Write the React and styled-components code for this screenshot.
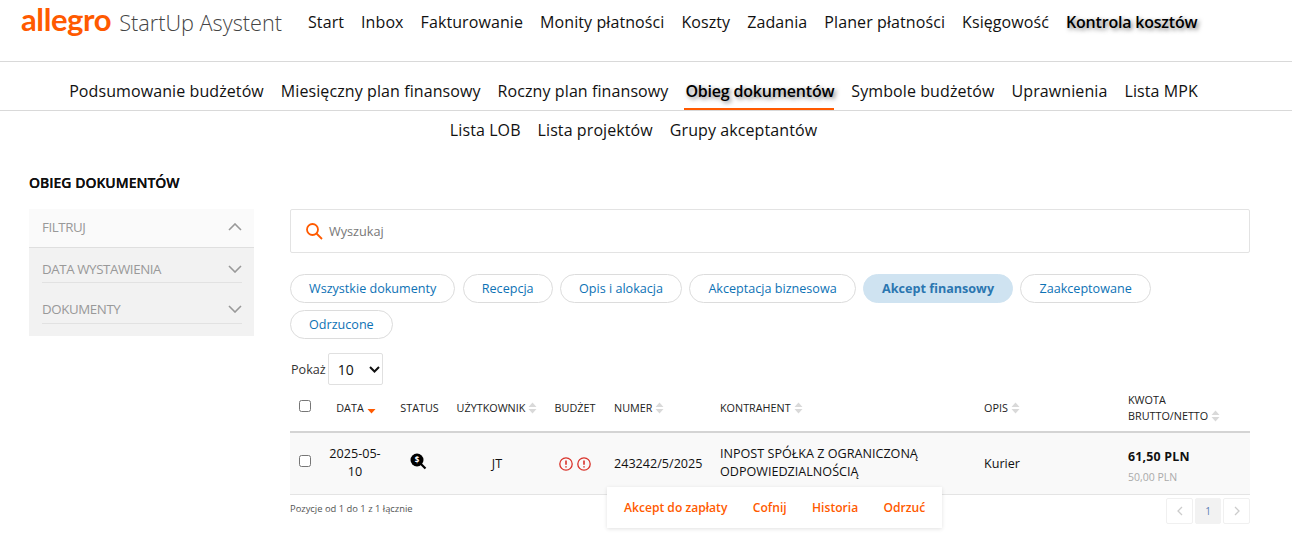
import React from "react";
import styled, { createGlobalStyle } from "styled-components";

const Global = createGlobalStyle`
  html, body { margin: 0; padding: 0; background: #fff; }
  body { font-family: "Open Sans", "Noto Sans", sans-serif; color: #111; overflow: hidden; }
  * { box-sizing: border-box; }
`;

const Page = styled.div`
  width: 1292px;
  height: 542px;
  overflow: hidden;
`;

const Header = styled.header`
  height: 62px;
  border-bottom: 1px solid #d9d9d9;
  display: flex;
  align-items: flex-start;
  padding: 0 0 0 21px;
`;

const Brand = styled.div`
  display: flex;
  align-items: baseline;
  width: 287px;
  height: 36px;
  white-space: nowrap;
`;

const BrandMark = styled.span`
  font-family: "Lato", sans-serif;
  font-weight: 700;
  font-size: 31px;
  letter-spacing: -0.4px;
  color: #ff5a00;
  line-height: 38px;
`;

const BrandText = styled.span`
  font-size: 21.7px;
  font-weight: 300;
  color: #444;
  margin-left: 8px;
  line-height: 38px;
`;

const TopNav = styled.nav`
  display: flex;
  gap: 17px;
  padding-top: 10px;
`;

const TopLink = styled.a`
  position: relative;
  font-size: 16px;
  line-height: 24px;
  letter-spacing: .09px;
  color: #111;
  white-space: nowrap;
  ${(p) => p.$active && `font-weight: 600; letter-spacing: -.2px; color:#000; text-shadow: 2px 2px 4px rgba(0,0,0,.5);`}
`;

const SubNavRow = styled.nav`
  display: flex;
  justify-content: center;
  gap: 17px;
  height: 38px;
  align-items: center;
  padding: 0 25px 0 0;
  ${(p) => p.$ruled && `border-bottom: 1px solid #d9d9d9; height: 49px; padding-top: 9px;`}
`;

const SubLink = styled(TopLink)`
  ${(p) =>
    p.$active &&
    `&::after {
      content: "";
      position: absolute;
      left: -1px;
      right: 0;
      bottom: -7px;
      height: 2px;
      background: #ff5a00;
    }`}
`;

const Content = styled.div`
  display: flex;
  flex-direction: column;
  padding: 24px 42px 0 29px;
`;

const Title = styled.h1`
  margin: 0 0 16px;
  font-size: 14px;
  line-height: 20px;
  font-weight: 600;
  color: #111;
  text-shadow: 0 0 .5px #111;
  height: 20px;
`;

const Columns = styled.div`
  display: grid;
  grid-template-columns: 225px 960px;
  column-gap: 36px;
  align-items: start;
`;

const Sidebar = styled.aside`
  background: #f2f2f2;
  height: 127px;
`;

const FilterHead = styled.div`
  height: 39px;
  background: #fafafa;
  border-bottom: 1px solid #dfdfdf;
  display: flex;
  align-items: center;
  justify-content: space-between;
  padding: 0 12px 2px 13px;
  font-size: 13.3px;
  letter-spacing: -0.4px;
  color: #999;
`;

const FilterRow = styled.div`
  margin: 0 12px 0 13px;
  height: ${(p) => p.$h}px;
  border-bottom: 1px solid #e2e2e2;
  display: flex;
  align-items: center;
  justify-content: space-between;
  padding: ${(p) => p.$pt}px 0 4px;
  font-size: 13.3px;
  letter-spacing: -0.4px;
  color: #999;
`;

const Main = styled.main`
  display: flex;
  flex-direction: column;
  min-width: 0;
`;

const Search = styled.div`
  height: 44px;
  border: 1px solid #e3e3e3;
  border-radius: 2px;
  display: flex;
  align-items: center;
  gap: 6px;
  padding-left: 14px;
  font-size: 12.7px;
  color: #777;
`;

const Tabs = styled.div`
  display: flex;
  flex-wrap: wrap;
  gap: 7px 7.4px;
  margin-top: 21px;
`;

const Tab = styled.button`
  height: 29px;
  padding: 0 18px;
  border-radius: 15px;
  border: 1px solid ${(p) => (p.$active ? "#cfe3f1" : "#dcdcdc")};
  background: ${(p) => (p.$active ? "#cfe3f1" : "#fff")};
  color: ${(p) => (p.$active ? "#2b76b0" : "#0d72b5")};
  font-family: inherit;
  font-size: 12.6px;
  font-weight: ${(p) => (p.$active ? 700 : 400)};
  white-space: nowrap;
`;

const ShowRow = styled.div`
  display: flex;
  align-items: center;
  gap: 2px;
  margin-top: 14px;
  height: 32px;
  font-size: 12.6px;
  color: #333;
  padding-left: 1px;
`;

const PageSelect = styled.div`
  width: 55px;
  height: 32px;
  border: 1px solid #e0e0e0;
  border-radius: 2px;
  display: flex;
  align-items: center;
  justify-content: space-between;
  padding: 0 2px 0 9px;
  font-size: 14px;
  color: #111;
`;

const Table = styled.table`
  width: 960px;
  border-collapse: collapse;
  table-layout: fixed;
`;

const Th = styled.th`
  height: 47px;
  padding: 0 0 0 ${(p) => p.$pl ?? 0}px;
  border-bottom: 2px solid #d4d4d4;
  font-size: 10.8px;
  line-height: 16px;
  font-weight: 400;
  color: #222;
  text-align: ${(p) => p.$align || "left"};
  vertical-align: middle;
`;

const Td = styled.td`
  height: 62px;
  padding: ${(p) => p.$pt ?? 0}px 0 0 ${(p) => p.$pl ?? 0}px;
  background: #f9f9f9;
  border-bottom: 1px solid #e4e4e4;
  font-size: 12.6px;
  line-height: 18px;
  color: #111;
  text-align: ${(p) => p.$align || "left"};
  vertical-align: middle;
`;

const Box = styled.span`
  display: inline-block;
  position: relative;
  top: -3px;
  width: 12px;
  height: 12px;
  border: 1px solid #767676;
  border-radius: 2.5px;
  background: #fff;
  margin-left: 9px;
  vertical-align: middle;
`;

const DateText = styled.span`
  display: block;
  padding-right: 2px;
`;

const StatusIcon = styled.svg`
  margin-right: 2px;
  vertical-align: -2px;
`;

const Amounts = styled.div`
  padding-top: 7px;
`;

const Gross = styled.div`
  font-weight: 700;
  font-size: 12.4px;
  letter-spacing: .2px;
  line-height: 21px;
`;

const Net = styled.div`
  color: #aaa;
  font-size: 10.5px;
  line-height: 21px;
`;

const Sorter = styled.svg`
  width: 9px;
  height: 12px;
  margin-left: 3px;
  vertical-align: -2px;
`;

const Alerts = styled.span`
  display: inline-flex;
  gap: 4px;
  vertical-align: middle;
`;

const Footer = styled.div`
  position: relative;
  display: flex;
  justify-content: space-between;
  align-items: flex-start;
  height: 40px;
  padding-top: 3px;
`;

const Info = styled.div`
  font-size: 9.4px;
  line-height: 22px;
  color: #555;
`;

const Pager = styled.div`
  display: flex;
  gap: 2px;
`;

const PageBtn = styled.div`
  width: ${(p) => (p.$active ? 26 : 27)}px;
  height: 26px;
  border: 1px solid ${(p) => (p.$active ? "#f2f2f2" : "#f0f0f0")};
  background: ${(p) => (p.$active ? "#f2f2f2" : "#fff")};
  border-radius: 2px;
  display: flex;
  align-items: center;
  justify-content: center;
  font-size: 10px;
  color: #5b7fb5;
`;

const Actions = styled.div`
  position: absolute;
  left: 317px;
  top: -8px;
  width: 335px;
  height: 41px;
  background: #fff;
  box-shadow: 0 1px 4px rgba(0, 0, 0, .12);
  display: flex;
  align-items: center;
  gap: 25.4px;
  padding-left: 17px;
  z-index: 2;
`;

const Action = styled.a`
  color: #ff5a00;
  font-size: 12.1px;
  font-weight: 600;
  white-space: nowrap;
`;

const Chevron = ({ up }) => (
  <svg width="14" height="8" viewBox="0 0 14 8" fill="none" stroke="#999" strokeWidth="1.6">
    <path d={up ? "M1 7l6-6 6 6" : "M1 1l6 6 6-6"} />
  </svg>
);

const SortIcon = () => (
  <Sorter viewBox="0 0 9 12" fill="#d9d9d9">
    <path d="M4.5 0.5L8.5 5H0.5zM4.5 11.5L0.5 7h8z" />
  </Sorter>
);

const SortActive = () => (
  <Sorter viewBox="0 0 9 12" fill="#ff5a00">
    <path d="M0.5 7h8L4.5 11.5z" />
  </Sorter>
);

const Alert = () => (
  <svg width="14" height="14" viewBox="0 0 14 14" fill="none" stroke="#d9322a" strokeWidth="1.3">
    <circle cx="7" cy="7" r="6.2" />
    <path d="M7 3.5v4.2M7 9.2v1.3" strokeWidth="1.6" />
  </svg>
);

const top = ["Start", "Inbox", "Fakturowanie", "Monity płatności", "Koszty", "Zadania", "Planer płatności", "Księgowość"];
const sub = ["Podsumowanie budżetów", "Miesięczny plan finansowy", "Roczny plan finansowy", "Obieg dokumentów", "Symbole budżetów", "Uprawnienia", "Lista MPK"];
const sub2 = ["Lista LOB", "Lista projektów", "Grupy akceptantów"];
const tabs = ["Wszystkie dokumenty", "Recepcja", "Opis i alokacja", "Akceptacja biznesowa", "Akcept finansowy", "Zaakceptowane", "Odrzucone"];
const cols = [33, 66, 61, 94, 62, 106, 264, 144, 130];

export default function App() {
  return (
    <Page>
      <Global />
      <Header>
        <Brand>
          <BrandMark>allegro</BrandMark>
          <BrandText>StartUp Asystent</BrandText>
        </Brand>
        <TopNav>
          {top.map((t) => <TopLink key={t}>{t}</TopLink>)}
          <TopLink $active>Kontrola kosztów</TopLink>
        </TopNav>
      </Header>
      <SubNavRow $ruled>
        {sub.map((t) => <SubLink key={t} $active={t === "Obieg dokumentów"}>{t}</SubLink>)}
      </SubNavRow>
      <SubNavRow>
        {sub2.map((t) => <SubLink key={t}>{t}</SubLink>)}
      </SubNavRow>
      <Content>
        <Title>OBIEG DOKUMENTÓW</Title>
        <Columns>
          <Sidebar>
            <FilterHead>FILTRUJ <Chevron up /></FilterHead>
            <FilterRow $h={35} $pt={12}>DATA WYSTAWIENIA <Chevron /></FilterRow>
            <FilterRow $h={41} $pt={15}>DOKUMENTY <Chevron /></FilterRow>
          </Sidebar>
          <Main>
            <Search>
              <svg width="18" height="18" viewBox="0 0 18 18" fill="none" stroke="#ff5a00" strokeWidth="1.8">
                <circle cx="7.5" cy="7.5" r="5.5" />
                <path d="M11.5 11.5l5.5 5.5" />
              </svg>
              Wyszukaj
            </Search>
            <Tabs>
              {tabs.map((t) => <Tab key={t} $active={t === "Akcept finansowy"}>{t}</Tab>)}
            </Tabs>
            <ShowRow>
              Pokaż
              <PageSelect>
                10
                <svg width="11" height="7" viewBox="0 0 11 7" fill="none" stroke="#111" strokeWidth="2">
                  <path d="M1 1l4.5 4.5L10 1" />
                </svg>
              </PageSelect>
            </ShowRow>
            <Table>
              <colgroup>
                {cols.map((w, i) => <col key={i} style={{ width: w }} />)}
              </colgroup>
              <thead>
                <tr>
                  <Th><Box /></Th>
                  <Th $align="center">DATA<SortActive /></Th>
                  <Th $align="center">STATUS</Th>
                  <Th $align="center">UŻYTKOWNIK<SortIcon /></Th>
                  <Th $align="center">BUDŻET</Th>
                  <Th $pl={8}>NUMER<SortIcon /></Th>
                  <Th $pl={8}>KONTRAHENT<SortIcon /></Th>
                  <Th $pl={8}>OPIS<SortIcon /></Th>
                  <Th $pl={8}>KWOTA<br />BRUTTO/NETTO<SortIcon /></Th>
                </tr>
              </thead>
              <tbody>
                <tr>
                  <Td><Box /></Td>
                  <Td $align="center"><DateText>2025-05-<br />10</DateText></Td>
                  <Td $align="center">
                    <StatusIcon width="17" height="17" viewBox="0 0 17 17">
                      <path d="M10 10l5.5 5.5" stroke="#000" strokeWidth="2.2" fill="none" />
                      <circle cx="7" cy="7" r="6.5" fill="#000" />
                      <text x="7" y="10" textAnchor="middle" fontSize="8" fontWeight="700" fill="#fff" fontFamily="Open Sans">$</text>
                    </StatusIcon>
                  </Td>
                  <Td $align="center" $pt={2}>JT</Td>
                  <Td $align="center"><Alerts><Alert /><Alert /></Alerts></Td>
                  <Td $pl={8} $pt={2}>243242/5/2025</Td>
                  <Td $pl={8}>INPOST SPÓŁKA Z OGRANICZONĄ<br />ODPOWIEDZIALNOŚCIĄ</Td>
                  <Td $pl={8} $pt={2}>Kurier</Td>
                  <Td $pl={8}>
                    <Amounts>
                      <Gross>61,50 PLN</Gross>
                      <Net>50,00 PLN</Net>
                    </Amounts>
                  </Td>
                </tr>
              </tbody>
            </Table>
            <Footer>
              <Info>Pozycje od 1 do 1 z 1 łącznie</Info>
              <Actions>
                <Action>Akcept do zapłaty</Action>
                <Action>Cofnij</Action>
                <Action>Historia</Action>
                <Action>Odrzuć</Action>
              </Actions>
              <Pager>
                <PageBtn>
                  <svg width="6" height="10" viewBox="0 0 6 10" fill="none" stroke="#ccc" strokeWidth="1.3"><path d="M5 1L1 5l4 4" /></svg>
                </PageBtn>
                <PageBtn $active>1</PageBtn>
                <PageBtn>
                  <svg width="6" height="10" viewBox="0 0 6 10" fill="none" stroke="#ccc" strokeWidth="1.3"><path d="M1 1l4 4-4 4" /></svg>
                </PageBtn>
              </Pager>
            </Footer>
          </Main>
        </Columns>
      </Content>
    </Page>
  );
}
